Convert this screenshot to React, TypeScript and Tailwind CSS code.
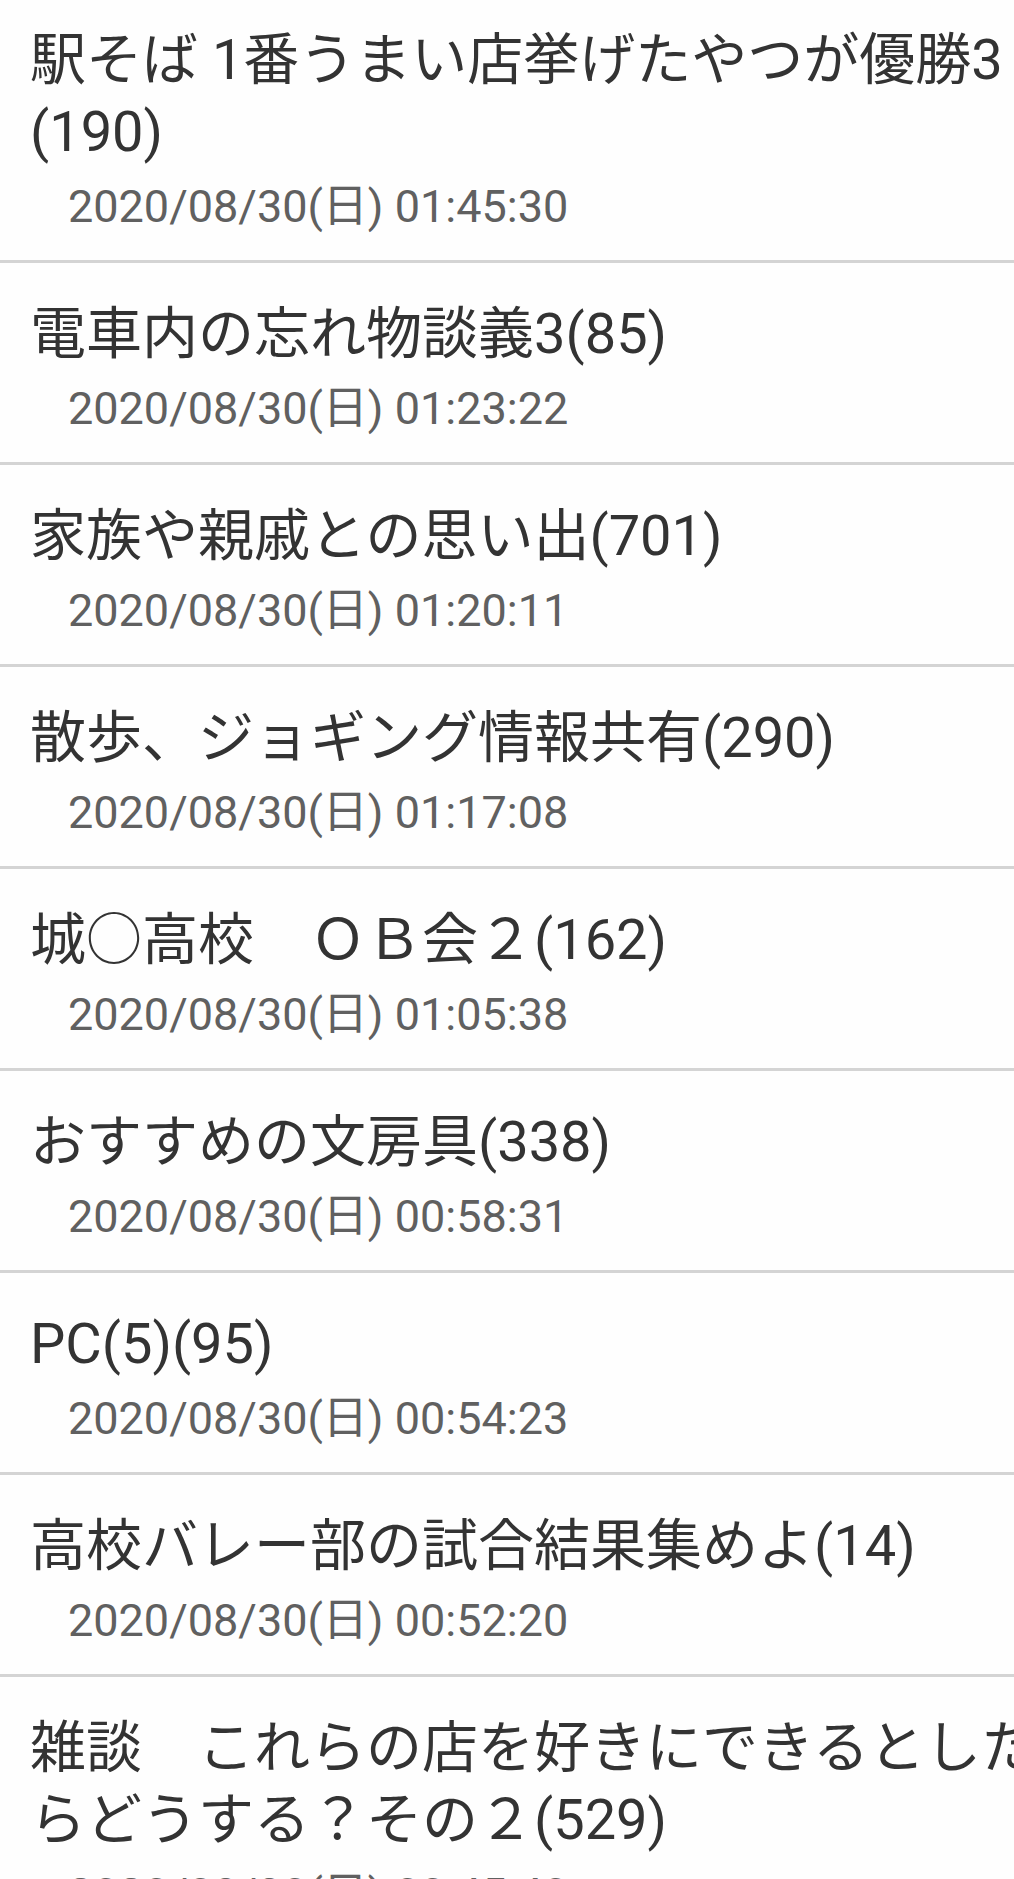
const threads = [
  { title: '駅そば 1番うまい店挙げたやつが優勝3', count: 190, date: '2020/08/30(日) 01:45:30' },
  { title: '電車内の忘れ物談義3', count: 85, date: '2020/08/30(日) 01:23:22' },
  { title: '家族や親戚との思い出', count: 701, date: '2020/08/30(日) 01:20:11' },
  { title: '散歩、ジョギング情報共有', count: 290, date: '2020/08/30(日) 01:17:08' },
  { title: '城○高校　ＯＢ会２', count: 162, date: '2020/08/30(日) 01:05:38' },
  { title: 'おすすめの文房具', count: 338, date: '2020/08/30(日) 00:58:31' },
  { title: 'PC(5)', count: 95, date: '2020/08/30(日) 00:54:23' },
  { title: '高校バレー部の試合結果集めよ', count: 14, date: '2020/08/30(日) 00:52:20' },
  { title: '雑談　これらの店を好きにできるとしたらどうする？その２', count: 529, date: '2020/08/30(日) 00:45:40' },
]

export default function App() {
  return (
    <div
      className="w-[1014px] h-[1879px] overflow-hidden bg-[#fefefe]"
      style={{ fontFamily: 'Roboto, "Noto Sans CJK JP", sans-serif' }}
    >
      <ul className="w-[1064px]">
        {threads.map((t, i) => (
          <ThreadRow key={i} first={i === 0} title={t.title} count={t.count} date={t.date} />
        ))}
      </ul>
    </div>
  )
}

function ThreadRow({
  first, title, count, date
}: {
  first: boolean
  title: string
  count: number
  date: string
}) {
  return (
    <li className={`border-b-[3px] border-[#d4d4d4] pl-[30px] pb-[23px] ${first ? 'pt-[24px]' : 'pt-[35px]'}`}>
      <p className="text-[56px] leading-[72px] text-[#333333]">
        {title}
        <wbr />
        ({count})
      </p>
      <p className="mt-[9px] pl-[38px] text-[45px] leading-[60px] text-[#606060]">{date}</p>
    </li>
  )
}
